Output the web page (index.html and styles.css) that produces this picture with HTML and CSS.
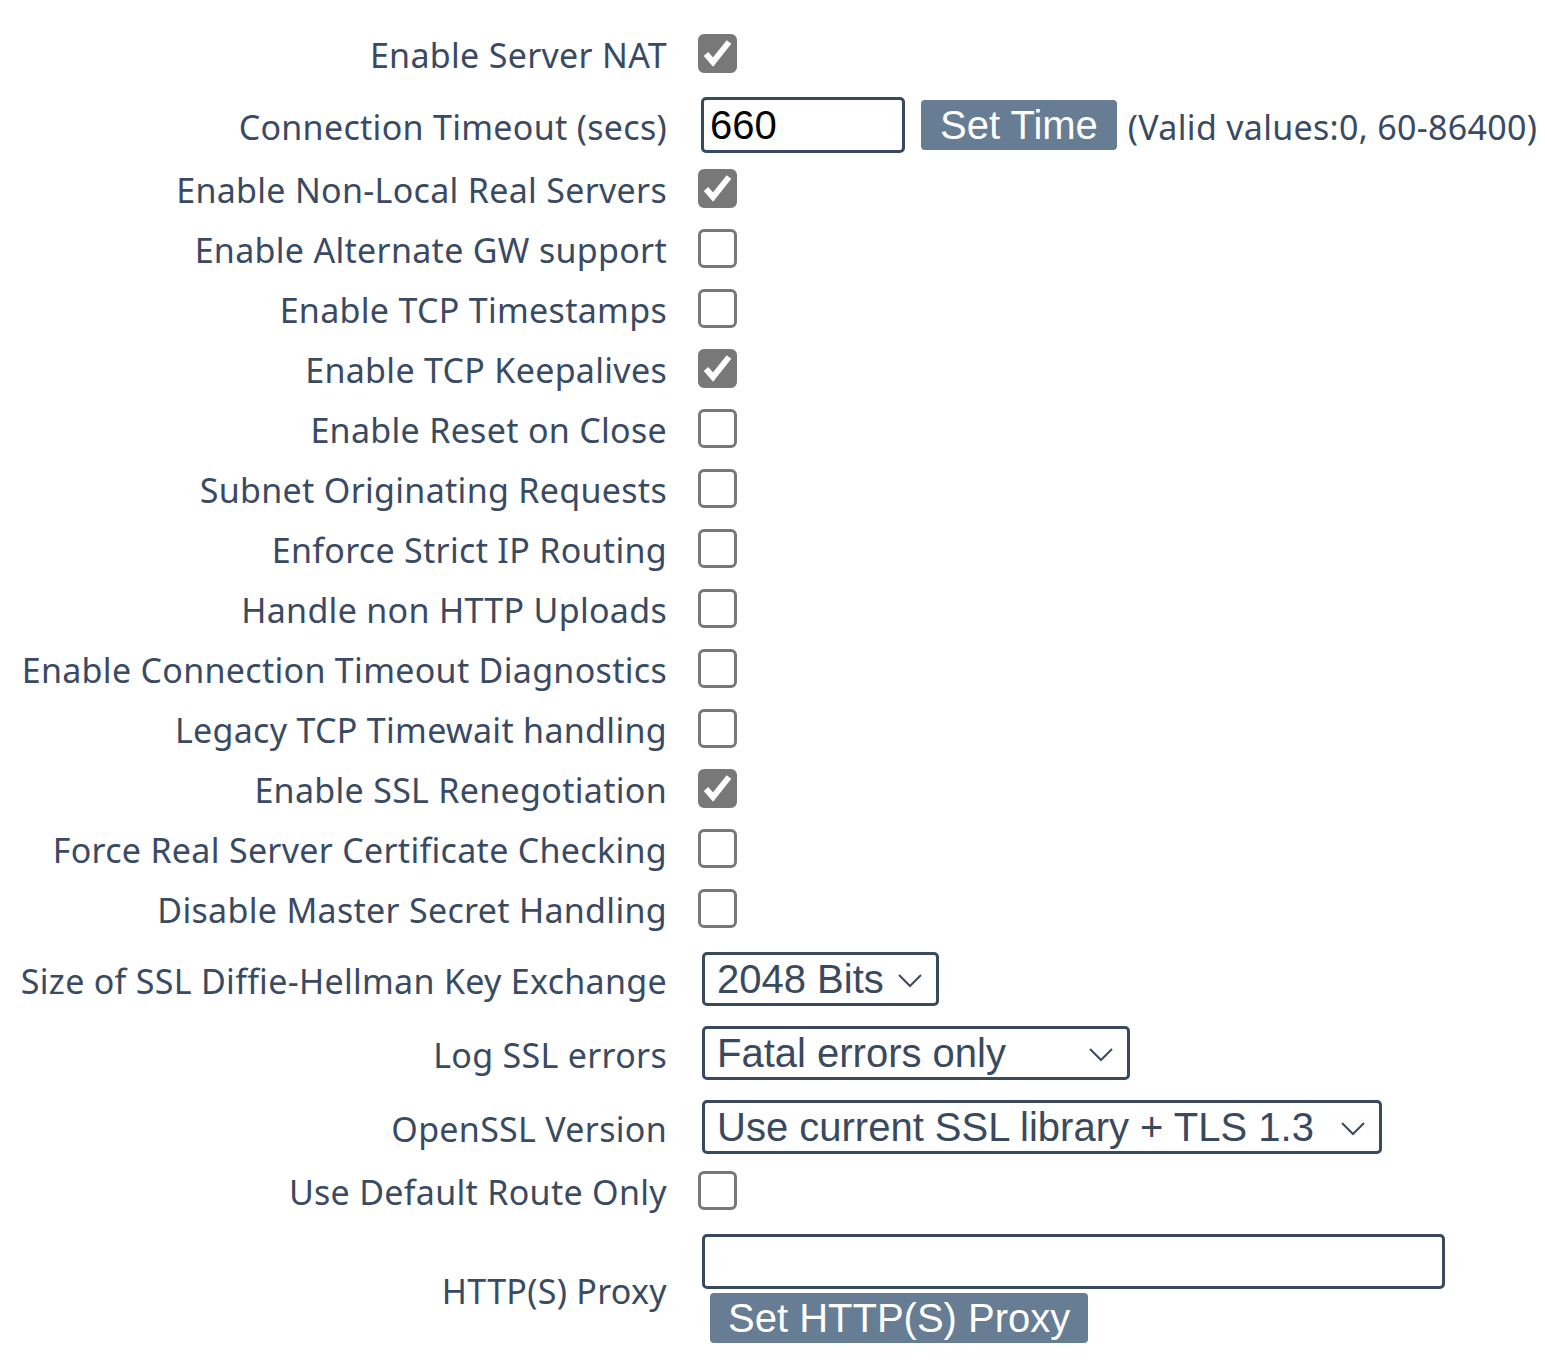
FILE: index.html
```html
<!DOCTYPE html>
<html>
<head>
<meta charset="utf-8">
<link rel="stylesheet" href="styles.css">
</head>
<body>
<div class="form">
  <div class="row r1">
    <div class="label">Enable Server NAT</div>
    <div class="ctl"><span class="cb on"><svg viewBox="0 0 39 39"><polyline points="8,20 15,28 31,8"/></svg></span></div>
  </div>
  <div class="row r2">
    <div class="label">Connection Timeout (secs)</div>
    <div class="ctl">
      <input class="text short" type="text" value="660">
      <button class="btn">Set Time</button>
      <span class="note">(Valid values:0, 60-86400)</span>
    </div>
  </div>
  <div class="row r3">
    <div class="label">Enable Non-Local Real Servers</div>
    <div class="ctl"><span class="cb on"><svg viewBox="0 0 39 39"><polyline points="8,20 15,28 31,8"/></svg></span></div>
  </div>
  <div class="row">
    <div class="label">Enable Alternate GW support</div>
    <div class="ctl"><span class="cb"></span></div>
  </div>
  <div class="row">
    <div class="label">Enable TCP Timestamps</div>
    <div class="ctl"><span class="cb"></span></div>
  </div>
  <div class="row">
    <div class="label">Enable TCP Keepalives</div>
    <div class="ctl"><span class="cb on"><svg viewBox="0 0 39 39"><polyline points="8,20 15,28 31,8"/></svg></span></div>
  </div>
  <div class="row">
    <div class="label">Enable Reset on Close</div>
    <div class="ctl"><span class="cb"></span></div>
  </div>
  <div class="row">
    <div class="label">Subnet Originating Requests</div>
    <div class="ctl"><span class="cb"></span></div>
  </div>
  <div class="row">
    <div class="label">Enforce Strict IP Routing</div>
    <div class="ctl"><span class="cb"></span></div>
  </div>
  <div class="row">
    <div class="label">Handle non HTTP Uploads</div>
    <div class="ctl"><span class="cb"></span></div>
  </div>
  <div class="row">
    <div class="label">Enable Connection Timeout Diagnostics</div>
    <div class="ctl"><span class="cb"></span></div>
  </div>
  <div class="row">
    <div class="label">Legacy TCP Timewait handling</div>
    <div class="ctl"><span class="cb"></span></div>
  </div>
  <div class="row">
    <div class="label">Enable SSL Renegotiation</div>
    <div class="ctl"><span class="cb on"><svg viewBox="0 0 39 39"><polyline points="8,20 15,28 31,8"/></svg></span></div>
  </div>
  <div class="row">
    <div class="label">Force Real Server Certificate Checking</div>
    <div class="ctl"><span class="cb"></span></div>
  </div>
  <div class="row">
    <div class="label">Disable Master Secret Handling</div>
    <div class="ctl"><span class="cb"></span></div>
  </div>
  <div class="row r15">
    <div class="label">Size of SSL Diffie-Hellman Key Exchange</div>
    <div class="ctl"><span class="sel w1"><span class="val">2048 Bits</span><svg class="chev" viewBox="0 0 24 14"><polyline points="1,1 12,12 23,1"/></svg></span></div>
  </div>
  <div class="row r16">
    <div class="label">Log SSL errors</div>
    <div class="ctl"><span class="sel w2"><span class="val">Fatal errors only</span><svg class="chev" viewBox="0 0 24 14"><polyline points="1,1 12,12 23,1"/></svg></span></div>
  </div>
  <div class="row r16">
    <div class="label">OpenSSL Version</div>
    <div class="ctl"><span class="sel w3"><span class="val">Use current SSL library + TLS 1.3</span><svg class="chev" viewBox="0 0 24 14"><polyline points="1,1 12,12 23,1"/></svg></span></div>
  </div>
  <div class="row r18">
    <div class="label">Use Default Route Only</div>
    <div class="ctl"><span class="cb"></span></div>
  </div>
  <div class="row proxy">
    <div class="label">HTTP(S) Proxy</div>
    <div class="ctl stack">
      <input class="text long" type="text" value="">
      <button class="btn btn2">Set HTTP(S) Proxy</button>
    </div>
  </div>
</div>
</body>
</html>
```
FILE: styles.css
```css
html, body {
  margin: 0;
  padding: 0;
  background: #ffffff;
}
body {
  padding: 23px 0 0 8px;
}
.form {
  display: flex;
  flex-direction: column;
}
.row {
  display: flex;
  align-items: center;
  height: 60px;
}
.r2 { margin-top: 12px; }
.r3 { margin-top: 3px; }
.r15 { margin-top: 11px; }
.r16 { margin-top: 14px; }
.r18 { margin-top: 3px; }
.proxy { height: auto; margin-top: 14px; }
.label {
  width: 659px;
  flex: none;
  text-align: right;
  padding-right: 31px;
  padding-top: 4px;
  font-family: "Noto Sans", "Open Sans", sans-serif;
  font-size: 34px;
  letter-spacing: 0.3px;
  color: #3a4a62;
  white-space: nowrap;
}
.ctl {
  display: flex;
  align-items: center;
}
.stack {
  flex-direction: column;
  align-items: flex-start;
}
.cb {
  box-sizing: border-box;
  width: 39px;
  height: 39px;
  border: 3px solid #787878;
  border-radius: 6px;
  display: block;
  position: relative;
}
.cb.on {
  background: #787878;
}
.cb svg {
  position: absolute;
  left: -3px;
  top: -3px;
  width: 39px;
  height: 39px;
}
.cb polyline {
  fill: none;
  stroke: #ffffff;
  stroke-width: 6;
}
.text {
  box-sizing: border-box;
  border: 3px solid #3a4a5e;
  border-radius: 5px;
  font-family: "Liberation Sans", Arial, sans-serif;
  font-size: 40px;
  color: #000;
  padding: 0 6px;
  outline: none;
  margin: 0 0 0 3px;
}
.short {
  width: 204px;
  height: 56px;
}
.long {
  width: 743px;
  height: 55px;
  margin-left: 4px;
}
.btn {
  box-sizing: border-box;
  background: #667d94;
  color: #ffffff;
  border: none;
  border-radius: 4px;
  font-family: "Liberation Sans", Arial, sans-serif;
  font-size: 40px;
  height: 50px;
  padding: 0 19px;
  margin-left: 16px;
  line-height: 50px;
}
.btn2 {
  margin-left: 12px;
  margin-top: 4px;
  padding: 0 18px;
}
.note {
  font-family: "Noto Sans", "Open Sans", sans-serif;
  font-size: 34px;
  letter-spacing: 0.3px;
  color: #3a4a62;
  margin-left: 11px;
  padding-top: 4px;
  white-space: nowrap;
}
.sel {
  box-sizing: border-box;
  position: relative;
  display: flex;
  align-items: center;
  height: 54px;
  border: 3px solid #3a4a5e;
  border-radius: 5px;
  margin-left: 4px;
  padding-left: 12px;
  font-family: "Liberation Sans", Arial, sans-serif;
  font-size: 40px;
  color: #3a4a5e;
  white-space: nowrap;
}
.w1 { width: 237px; }
.w2 { width: 428px; }
.w3 { width: 680px; }
.chev {
  position: absolute;
  right: 14px;
  top: 19px;
  width: 24px;
  height: 14px;
}
.chev polyline {
  fill: none;
  stroke: #3a4a5e;
  stroke-width: 2;
}
```
